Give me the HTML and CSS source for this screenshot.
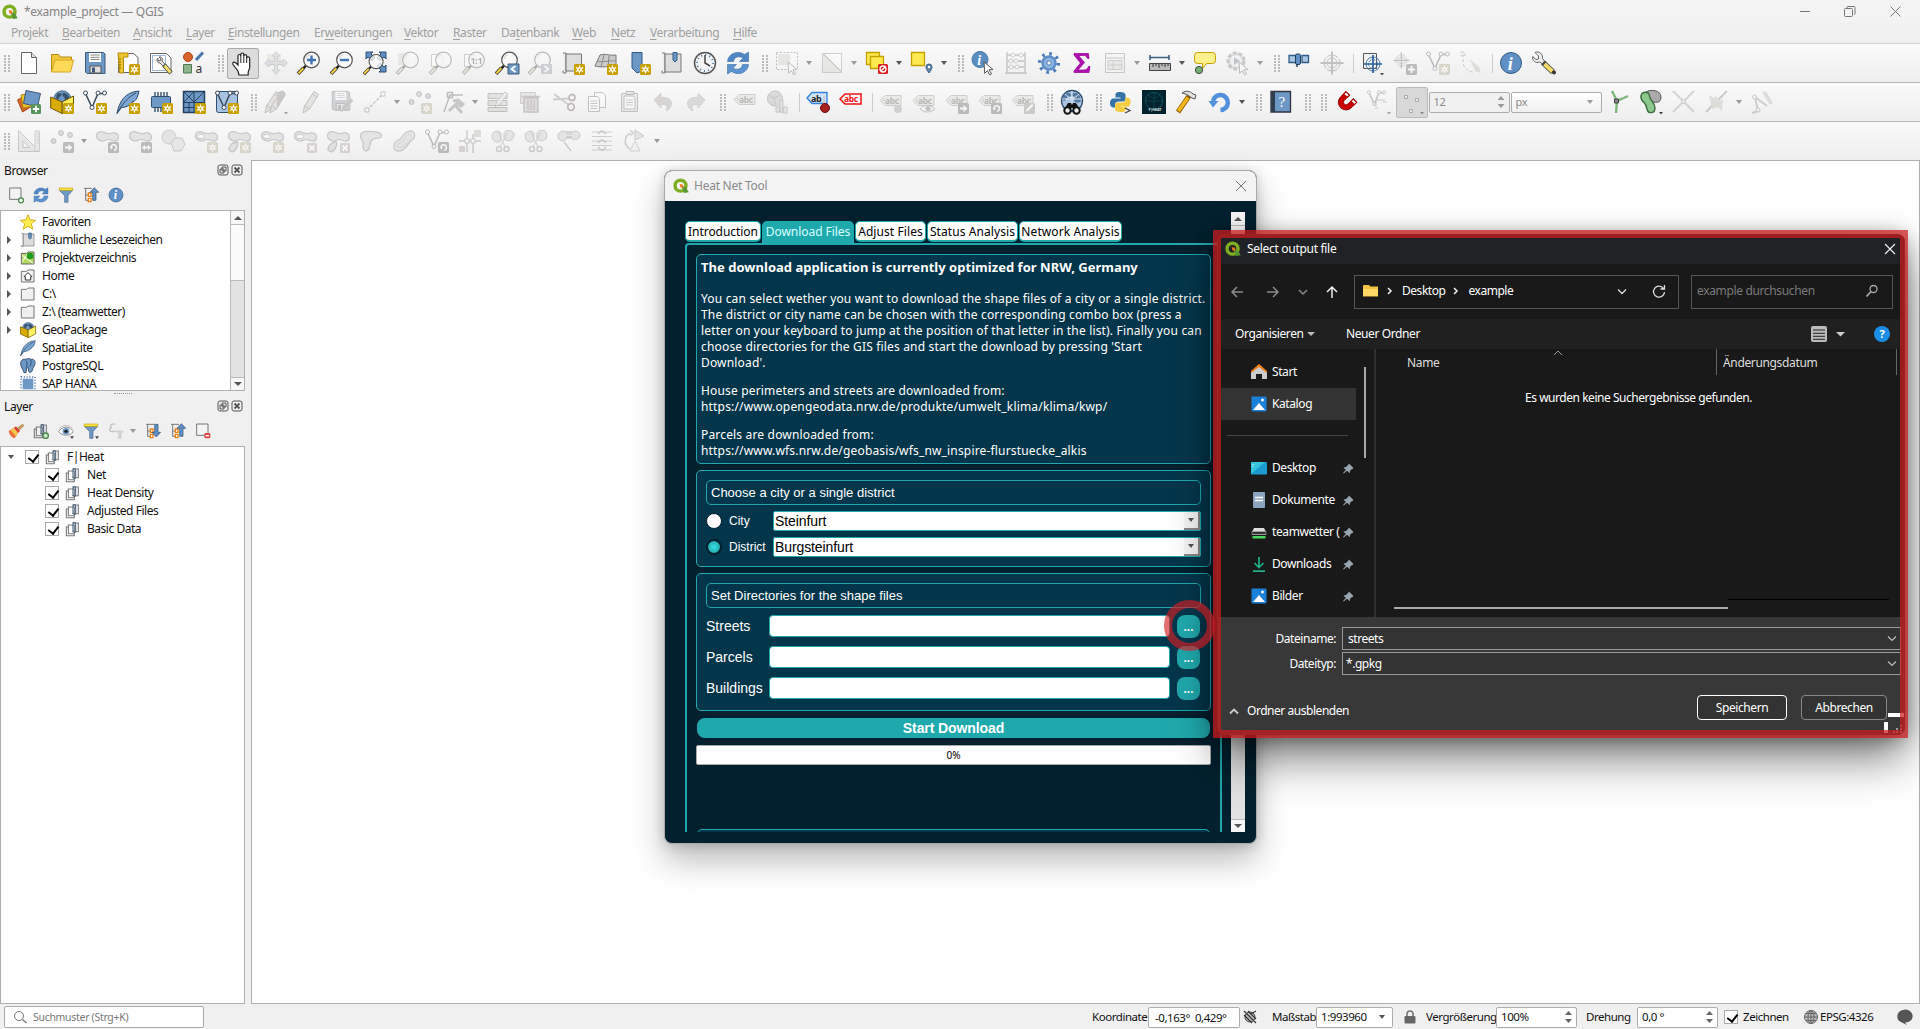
FILE: index.html
```html
<!DOCTYPE html>
<html lang="de">
<head>
<meta charset="utf-8">
<title>*example_project — QGIS</title>
<link rel="stylesheet" href="styles.css">
</head>
<body>
<svg class="defs" aria-hidden="true"><defs>
<!-- badges -->
<g id="bnew"><rect x="13" y="13" width="11" height="11" rx="1.5" fill="#c8a000"/><path d="M18.5 14.4v8.2M14.9 16.4l7.2 4.2M14.9 20.6l7.2-4.2" stroke="#fff" stroke-width="1.2"/><circle cx="18.5" cy="18.5" r="2.3" fill="#fff"/><circle cx="18.5" cy="18.5" r="1" fill="#c8a000"/></g>
<g id="badd"><rect x="14" y="14" width="10" height="10" rx="1.5" fill="#59945c"/><path d="M19 15.800v6.400M15.800 19h6.400" stroke="#fff" stroke-width="1.800"/></g>
<g id="bdel"><rect x="14" y="14" width="10" height="10" rx="1.500" fill="#c88a92"/><path d="M16.500 16.500l5 5M21.500 16.500l-5 5" stroke="#fff" stroke-width="1.800"/></g>
<g id="bmove"><rect x="13" y="13" width="11" height="11" rx="1.500" fill="#555"/><path d="M15 17.500h3.500v-2.500l4 3.500-4 3.500v-2.500h-3.500z" fill="#fff"/></g>
<g id="bplus"><rect x="13" y="13" width="11" height="11" rx="1.500" fill="#555"/><path d="M18.500 15v7M15 18.500h7" stroke="#fff" stroke-width="2"/></g>
<g id="bscale"><rect x="13" y="13" width="11" height="11" rx="1.500" fill="#555"/><path d="M14 18.500l3-3v2h3v-2l3 3-3 3v-2h-3v2z" fill="#fff"/></g>
<g id="brot"><rect x="13" y="13" width="11" height="11" rx="1.500" fill="#555"/><path d="M16 18.500a2.700 2.700 0 1 1 3 2.700" fill="none" stroke="#fff" stroke-width="1.500"/><path d="M14.600 18h3.400l-1.700 2.500z" fill="#fff"/></g>
<g id="bpen"><rect x="13" y="13" width="11" height="11" rx="1.500" fill="#888468"/><path d="M15 22l1-3 5-5 1.500 1.500-5 5z" fill="#fff"/></g>
<g id="lens"><circle cx="14.500" cy="9" r="7.800" fill="#fafafa" fill-opacity=".8" stroke="#555" stroke-width="1.200"/><path d="M9 8a6 6 0 0 1 4-4.500" stroke="#ccc" fill="none"/><path d="M8.800 14.800l-2.500 2.500" stroke="#222" stroke-width="2.500"/><path d="M6.500 17l-5.500 5.800" stroke="#333" stroke-width="3.600"/><path d="M6.300 17.200l-4.900 5.200" stroke="#fcd440" stroke-width="2"/></g>
<g id="blob"><path d="M1.500 7c0-5 5-5 8-3.500S15 5 17 4s6.500.5 6.500 4-3 5-6.500 3.500-4.500-1.500-7 0S1.500 11 1.500 7z" fill="#bcc8bc" stroke="#777" stroke-width="1.300"/></g>
<g id="vee"><path d="M2.500 3.500l6.500 14 6-14h7" fill="none" stroke="#3a4a58" stroke-width="1.500"/><g fill="#fff" stroke="#3a4a58"><circle cx="2.500" cy="3" r="2"/><circle cx="9" cy="17.500" r="2"/><circle cx="15" cy="3" r="2"/><circle cx="21.500" cy="3" r="2"/></g></g>
<g id="globe"><circle cx="12" cy="12" r="11" fill="#6d97c4" stroke="#2f4e6c"/><path d="M5 5c3-2 6-1 6 1s-3 2-3 4-4 2-4 0zM13 4c4-1 7 3 8 6s-3 5-5 4 0-4-2-5-3-3-1-5zM8 14c3 0 5 2 4 4s-3 4-4 2-2-5 0-6z" fill="#37526f"/></g>
<g id="globe2"><circle cx="12" cy="11" r="10.500" fill="#a9c3e0" stroke="#2f4e6c" stroke-width="1.300"/><path d="M3 6c4-4 8-4 8-1s-4 1-5 4-3 2-4 0zM13 3c5-1 8 4 8 7s-4 3-6 2 1-4-1-5-3-2-1-4z" fill="#5478a0"/><path d="M12 1v18M2 9h20M5 4c4 5 10 5 14 0" fill="none" stroke="#dce8f4"/></g>
<g id="mouse"><path d="M13 11l9 7.500-4 .3 2.500 4-1.800 1-2.300-4.200-2.700 2.800z" fill="#fff" stroke="#555"/></g>
<g id="abc"><path d="M1 10.500L6 5.500h16v10H6z" fill="#ddd6b8" stroke="#8c8668"/><circle cx="5" cy="10.500" r="1" fill="#8c8668"/><text x="6" y="13.500" font-size="8.500" font-weight="bold" fill="#444">abc</text></g>
<!-- project toolbar -->
<g id="new"><path d="M4.500 1.500h10l5 5v16h-15z" fill="#fff" stroke="#666"/><path d="M14.500 1.500v5h5" fill="#ddd" stroke="#666"/></g>
<g id="open"><path d="M1.500 20.500v-17h7l2 2.500h11v3" fill="#f3c73a" stroke="#b58a10"/><path d="M1.500 21L5 9h18.500l-3 12z" fill="#fcd956" stroke="#d2a625"/></g>
<g id="save"><path d="M2.500 1.500h18l1.500 1.500v19.500H4L2.500 21z" fill="#6d97c4" stroke="#3f5a78"/><path d="M6 2h12v9H6z" fill="#fff"/><path d="M7.500 4h9M7.500 6.300h9M7.500 8.500h9" stroke="#888"/><path d="M7 15h11v7H7z" fill="#ddd" stroke="#555"/><path d="M9 16.500h3v5H9z" fill="#3f5a78"/></g>
<g id="layout"><path d="M2.500 2.500h15l4.500 4v15h-19.500z" fill="#fff" stroke="#666"/><path d="M2 2h10v4H7.500v16H3.500z" fill="#ecc42c" stroke="#b58a10"/><path d="M3 8h2M3 11h2M3 14h2M3 17h2" stroke="#8a6a00"/><use href="#bnew"/></g>
<g id="layman"><path d="M1.500 2.500h16l4.500 4.500v14.500H1.500z" fill="#fff" stroke="#666"/><path d="M3.500 4.500h13v15h-13z" fill="none" stroke="#9db7e0"/><path d="M9 7c-2 2-1 5 2 5l3 3 2-2-3-3c1-3-1-5-3-4l2 2-1 2-2-.5z" fill="#e4e4e4" stroke="#666"/><path d="M15 14l7 8" stroke="#444" stroke-width="4.500"/><path d="M15.500 14.600l6 6.800" stroke="#f2dd6b" stroke-width="3"/></g>
<g id="style"><circle cx="6" cy="6" r="4.500" fill="#d9622b" stroke="#a84a1c"/><path d="M14 9l7-7.500" stroke="#4b77a8" stroke-width="3"/><path d="M1.500 13.500h8v8.500h-8z" fill="#8db58d" stroke="#4f7a4f"/><text x="13.500" y="22" font-size="12" fill="#333">a</text></g>
<g id="hand"><path d="M8 23l-1-4-5-6.500c-1-2 1-3.200 2.700-1.700L7 13V4c0-2 2.800-2 2.800 0V2.500c0-2 3-2 3 0V4c0-2 2.900-1.800 2.900.3V6c.2-1.700 3-1.500 3 .5V16l-1.500 4v3z" fill="#fff" stroke="#222" stroke-width="1.200"/><path d="M9.800 4v7M12.800 3v8M15.700 5v6" stroke="#222"/></g>
<g id="pansel"><path d="M3 3h14v12H3z" fill="#dcd2a4"/><path d="M12 .500l4 4.500h-2.500v5.500H19V8l4.500 4L19 16v-2.500h-5.500V19H16l-4 4.500L8 19h2.500v-5.500H5V16L.5 12 5 8v2.500h5.500V5H8z" fill="#aebdce" stroke="#7d8ea0"/></g>
<g id="zin"><use href="#lens"/><path d="M14.500 4.500v9M10 9h9" stroke="#3f75b5" stroke-width="2.400"/></g>
<g id="zout"><use href="#lens"/><path d="M10 9h9" stroke="#3f75b5" stroke-width="2.400"/></g>
<g id="zfull"><path d="M3 1h7L8 3l4 4-3 3-4-4-2 2zM23 1h-7l2 2-4 4 3 3 4-4 2 2zM23 21h-7l2-2-4-4 3-3 4 4 2-2z" fill="#5f8fc4" stroke="#2f4e6c"/><g transform="translate(0 2.500) scale(.9)"><use href="#lens"/></g></g>
<g id="zsel"><path d="M2 2h11v12H2z" fill="#dcd2a4"/><use href="#lens"/></g>
<g id="zlay"><path d="M2.500 3.500h11v12h-11z" fill="#fff" stroke="#888"/><use href="#lens"/></g>
<g id="zone"><path d="M2.500 3.500h11v12h-11z" fill="#fff" stroke="#888"/><use href="#lens"/><text x="8.500" y="12.500" font-size="9" font-weight="bold" fill="#333">1:1</text></g>
<g id="zlast"><use href="#lens"/><path d="M13 13h11v10H13z" fill="#6d97c4" stroke="#3f5a78"/><path d="M20.500 15l-4 3 4 3" stroke="#fff" stroke-width="1.800" fill="none"/></g>
<g id="znext"><use href="#lens"/><path d="M13 13h11v10H13z" fill="#6d97c4"/><path d="M16.500 15l4 3-4 3" stroke="#fff" stroke-width="1.800" fill="none"/></g>
<g id="mapv"><path d="M2 2h3v20H3c-2 0-2-2 0-2" fill="#eee" stroke="#777"/><path d="M5 3h15.500v17H5z" fill="#ddd" stroke="#777"/><use href="#bnew"/></g>
<g id="map3"><path d="M6 4c5-2 9 1 16 0v11c-7 0-14 2-21 0z" fill="#ccc" stroke="#777"/><path d="M3 10c6 2 12-1 18 0M10 4L7 16M15 5l-1 11" stroke="#888" fill="none"/><use href="#bnew"/></g>
<g id="bmark"><path d="M5 1.500h10V20L10 22l-5-5z" fill="#6d97c4" stroke="#2f5b88"/><use href="#bnew"/></g>
<g id="bmarks"><path d="M2 2h3v20H3c-2 0-2-2 0-2" fill="#eee" stroke="#777"/><path d="M5 3h16v18H5z" fill="#ddd" stroke="#777"/><path d="M13 1.500h4V9l-2 2-2-2z" fill="#6d97c4" stroke="#2f5b88"/></g>
<g id="clock"><circle cx="12" cy="12" r="10.500" fill="#f4f4f4" stroke="#555" stroke-width="1.500"/><circle cx="12" cy="12" r="8" fill="none" stroke="#4b77a8" stroke-width="2" stroke-dasharray="1 3.190"/><path d="M12 4v8l5 3" fill="none" stroke="#444" stroke-width="1.500"/></g>
<g id="refresh"><path d="M1.500 10.500C2 3 11-1.500 18.500 3.500L22.500 1v9.500h-9l3.500-3.500C13 4.500 8 6 7.500 10.500z" fill="#4f86c4" stroke="#3b6ba5" stroke-width=".6"/><path d="M22.500 13.500C22 21 13 25.500 5.500 20.500L1.500 23v-9.500h9L7 17c4 2.500 9 1 9.500-3.500z" fill="#5c93cf" stroke="#3b6ba5" stroke-width=".6"/></g>
<g id="select"><path d="M1.500 1.500h21v17h-21z" fill="#fbfbf0" stroke="#555" stroke-dasharray="2 1.500"/><path d="M3 3h12v11H3z" fill="#d4cba0"/><use href="#mouse"/></g>
<g id="selval"><path d="M2.500 2.500v19h19z" fill="#dcd2a4" stroke="#888"/><path d="M3.500 2.500h18v18z" fill="#fff" stroke="#888"/></g>
<g id="desel"><path d="M1.500 1.500h13v12h-13z" fill="#fce94f" stroke="#c4a000" stroke-width="1.300"/><path d="M5.500 5.500h13v12h-13z" fill="#fce94f" stroke="#c4a000" stroke-width="1.300"/><rect x="13" y="13" width="10" height="10" rx="1.500" fill="#d82020"/><circle cx="18" cy="18" r="3" fill="none" stroke="#fff" stroke-width="1.300"/><path d="M16 20l4-4" stroke="#fff" stroke-width="1.300"/></g>
<g id="selloc"><path d="M1.500 1.500h13v13h-13z" fill="#fce94f" stroke="#c4a000" stroke-width="1.300"/><path d="M19 22c-2-3-3-4-3-6a3 3 0 0 1 6 0c0 2-1 3-3 6z" fill="#5f84a4" stroke="#3f6484"/><circle cx="19" cy="16" r="1.200" fill="#fff"/></g>
<g id="ident"><circle cx="9" cy="8.500" r="8" fill="#5b8dc0" stroke="#4878ac"/><text x="6.300" y="13.500" font-size="14" font-style="italic" font-weight="bold" class="sf" fill="#fff">i</text><use href="#mouse"/></g>
<g id="abacus"><path d="M3 1v20M21 1v20M1 22h22M3 4h18M3 10h18M3 16h18" fill="none" stroke="#666" stroke-width="1.300"/><g fill="#fff" stroke="#888"><circle cx="9" cy="4" r="2"/><circle cx="17" cy="4" r="2"/><circle cx="7" cy="10" r="2"/><circle cx="12" cy="10" r="2"/><circle cx="7" cy="16" r="2"/><circle cx="13" cy="16" r="2"/></g></g>
<g id="gear"><circle cx="12" cy="12" r="9.300" fill="none" stroke="#4a7ab5" stroke-width="3.500" stroke-dasharray="2.600 4.700"/><circle cx="12" cy="12" r="6.500" fill="#8fb4e0" stroke="#5f8fc8" stroke-width="2.500"/><circle cx="12" cy="12" r="2.200" fill="#f4f4f4" stroke="#4a7ab5"/></g>
<g id="sigma"><path d="M4 2.500h14.500l.5 5h-1.500C16.500 5 15.500 4.500 13 4.500H8.500l6 7-6.500 7.500h5.500c3 0 4-1 5-3.500h1.500l-1 6H4v-1.500l6.500-8L4 4z" fill="#b010b0" stroke="#900090" stroke-width=".7"/></g>
<g id="table"><path d="M2.500 2.500h19v19h-19z" fill="#f4f4f4" stroke="#777"/><path d="M3 7h18" stroke="#777"/><path d="M5 9.500h14v9H5zM5 14h14M10 9.500v9" fill="#dcd2a4" stroke="#888"/></g>
<g id="measure"><path d="M2 6.500h19M2 4v5M21 4v5" stroke="#3d5f80" stroke-width="1.600"/><path d="M1.500 12.500h21v7h-21z" fill="#bbb" stroke="#444"/><path d="M5 13v3M8 13v2M11 13v4M14 13v2M17 13v3M20 13v2" stroke="#333"/></g>
<g id="tip"><path d="M4.500 1.500h15a3 3 0 0 1 3 3v5a3 3 0 0 1-3 3h-6l-4 5v-5h-5a3 3 0 0 1-3-3v-5a3 3 0 0 1 3-3z" fill="#fcf08c" stroke="#c4a000"/><circle cx="6" cy="19" r="3.600" fill="#73b273" stroke="#444"/></g>
<g id="action"><circle cx="10" cy="10" r="8" fill="#ddd" stroke="#777" stroke-width="3" stroke-dasharray="4 1.700"/><circle cx="10" cy="10" r="6.500" fill="#eee" stroke="#888"/><path d="M8 6l6 4-6 4z" fill="#3b75b0"/><use href="#mouse"/></g>
<g id="gps"><path d="M2 4.500h8v7H2zM15 4.500h6.500v7H15z" fill="#a9c6e3" stroke="#2f5b88" stroke-width="1.300"/><rect x="8.500" y="3" width="5" height="10.500" rx="1.500" fill="#5f8fc4" stroke="#24425f"/><path d="M10 13v3" stroke="#24425f" stroke-width="1.500"/></g>
<g id="cross"><circle cx="12" cy="12" r="8" fill="#eef" stroke="#555" stroke-dasharray="5 1.500"/><circle cx="12" cy="12" r="5" fill="none" stroke="#777"/><path d="M12 .500v23M.500 12h23" stroke="#667" stroke-width="2"/></g>
<g id="cross2"><path d="M3.500 2.500h13v15h-13z" fill="#f4f4f4" stroke="#555"/><circle cx="13" cy="13" r="7" fill="none" stroke="#4b77a8"/><circle cx="13" cy="13" r="4.500" fill="none" stroke="#4b77a8" stroke-dasharray="3 1"/><path d="M13 4v18M4 13h18" stroke="#2f62a0" stroke-width="1.700"/></g>
<g id="info"><circle cx="12" cy="12" r="10.500" fill="#6090c4" stroke="#2f5b88"/><text x="8.700" y="18.500" font-size="18" font-style="italic" font-weight="bold" class="sf" fill="#fff">i</text></g>
<g id="wrench"><path d="M3 1.500l3.500 3.500v3L4 8.500.7 5.500C0 10 4 12.500 7.500 11L11 13l2-2-2.500-3.500C11 3 7-.5 3 1.500z" fill="#eee" stroke="#666"/><path d="M11 11.500l10 9.500" stroke="#444" stroke-width="5.500"/><path d="M12.500 13l8 7.500" stroke="#f2dd6b" stroke-width="3.800"/><circle cx="22" cy="21.500" r="2" fill="#333"/></g>
<!-- layer toolbar -->
<g id="dsm"><path d="M.5 10l10-6 5 12-10 6z" fill="#d9622b" stroke="#a84a1c"/><path d="M4 5l11-2 2 13-11 2z" fill="#f0c52c" stroke="#a98512"/><path d="M9 .500l14.500 3-3 13-14-3z" fill="#6d97c4" stroke="#3f5a78"/><use href="#badd"/></g>
<g id="gpkg"><g transform="translate(3 0) scale(.78)"><use href="#globe"/></g><path d="M.7 7l11.500 5v11.500L.7 18z" fill="#d8ac00" stroke="#6b5400"/><path d="M12.200 12L23.500 6v12l-11.300 5.500z" fill="#fcf060" stroke="#6b5400"/></g>
<g id="quill"><path d="M1 23.500C3 13 8 2 23 1c-1 5-2 8-5 10.500l-2 .3.500 1C13 16 9 17.500 5.500 17.500z" fill="#7ea6d4" stroke="#2f4e6c"/><path d="M1 23.500C6 14 12 7 20 3" stroke="#2f4e6c" fill="none"/></g>
<g id="chip"><path d="M6 2v20M9 2v20M12 2v20M15 2v20M18 2v20" stroke="#24425f" stroke-width="1.300"/><rect x="2.500" y="6.500" width="19" height="11" rx="1" fill="#6d97c4" stroke="#2f4e6c"/><use href="#bnew"/></g>
<g id="mesh"><path d="M1.500 1.500h21v21h-21z" fill="#6d97c4" stroke="#24425f" stroke-width="1.500"/><path d="M12 1.500v21M1.500 12.500h21M1.500 1.500l11 11M12 1.500L1.500 12.500M12 12l10.500-10.500M7 12.500v10M1.500 17.500H12" stroke="#24425f" fill="none"/><use href="#bnew"/></g>
<g id="virt"><rect x="1.500" y="1.500" width="21" height="21" rx="2" fill="#a8c3e2" stroke="#2f4e6c"/><use href="#vee"/><use href="#bnew"/></g>
<g id="pencil"><path d="M6 23l1.500-7L17 1.500l4.500 3L12.500 19z" fill="#ccc49c" stroke="#666"/><path d="M8 16l4.500 3M15 4l5 3" stroke="#666"/></g>
<g id="pencils"><g transform="translate(-5 0)"><use href="#pencil"/></g><use href="#pencil"/><path d="M13 3l6-2 2 2-8 14" fill="#a0705c" stroke="#666"/></g>
<g id="savee"><g transform="scale(.9)"><use href="#save"/></g><path d="M11 22l2-6 7-8 3 2.500-7 8z" fill="#a0705c" stroke="#888"/></g>
<g id="line"><path d="M4 20L20 4" stroke="#666" stroke-width="1.300" stroke-dasharray="3 1.500"/><path d="M2 18h4v4H2zM18 2h4v4h-4z" fill="#fff" stroke="#666"/></g>
<g id="pts"><g fill="#aaa" stroke="#666"><circle cx="3.500" cy="12" r="2.500"/><circle cx="11" cy="4" r="2.500"/><circle cx="20" cy="6" r="2.500"/></g></g>
<g id="vtx"><path d="M3 22L9 5h13M6.500 2.500h5v5h-5z" fill="none" stroke="#555" stroke-width="1.400"/><path d="M8 21l9-9M12 11l5-1 5 4-2 2-3-2M14 15l7 8" fill="none" stroke="#777" stroke-width="3"/></g>
<g id="attr"><path d="M2 3.500h19v5H2zM2 10.500h19v5H2zM2 17.500h19v4H2z" fill="#c8c09a" stroke="#666"/><path d="M9 17l2-6 8-9 3 2-8 10z" fill="#ddd" stroke="#777"/></g>
<g id="trash"><path d="M1.500 2.500h15v11h-15z" fill="#d4cba0" stroke="#888"/><path d="M3 6.500h18M5 8h14v14H5zM9 10v10M12 10v10M15 10v10" fill="#caa" stroke="#866" stroke-width="1.400"/></g>
<g id="cut"><path d="M2 4l15 11M1 9.500l16-1" stroke="#888" stroke-width="2"/><circle cx="20" cy="7.500" r="3" fill="none" stroke="#a44" stroke-width="1.800"/><circle cx="19" cy="17" r="3.300" fill="none" stroke="#a44" stroke-width="1.800"/></g>
<g id="copy"><path d="M9.500 2.500h8l3 3v12h-11z" fill="#fff" stroke="#666"/><path d="M3.500 6.500h9l2 2v13h-11z" fill="#fff" stroke="#666"/><path d="M5.500 11h7M5.500 13.500h7M5.500 16h7M5.500 18.500h7" stroke="#777"/></g>
<g id="paste"><path d="M3.500 3.500h16v18h-16z" fill="#ddd6b8" stroke="#666"/><path d="M6 6h9l2 2v11H6z" fill="#fff" stroke="#666"/><path d="M8 10h7M8 12.500h7M8 15h7" stroke="#777"/><path d="M8 1.500h8v3H8z" fill="#ccc" stroke="#555"/></g>
<g id="undo"><path d="M3 10l7-7v4.500c8-1 12 3 10 8.500-1 3-3 4-5 5 2-5 1-7-5-6.500V18z" fill="#b09a8a" stroke="#998"/></g>
<g id="redo"><path d="M21 10l-7-7v4.500C6 6.500 2 10.500 4 16c1 3 3 4 5 5-2-5-1-7 5-6.500V18z" fill="#9ab09a" stroke="#899"/></g>
<g id="pie"><circle cx="9" cy="8.500" r="7.500" fill="#9cba9c" stroke="#777"/><path d="M9 8.500V16A7.500 7.500 0 0 1 2.500 5zM9 8.500L2.500 5A7.500 7.500 0 0 1 15 4z" fill="#c4a0a0" stroke="#777"/><path d="M10 17h4v5h-4zM14 10h3v12h-3zM17 17h4v6h-4z" fill="#ccc" stroke="#777"/></g>
<g id="labpin"><path d="M1 8L6 2.500h15v11H6z" fill="#cfe3fc" stroke="#3584e4" stroke-width="1.400"/><text x="5" y="12" font-size="9" font-weight="bold" fill="#222">ab</text><path d="M18 6v8" stroke="#ccc" stroke-width="2"/><circle cx="19" cy="18" r="4.500" fill="#a82020" stroke="#701010"/></g>
<g id="labred"><path d="M1 8L6 3h16v10H6z" fill="#fff" stroke="#f01010" stroke-width="1.500"/><text x="5" y="11" font-size="8.500" font-weight="bold" fill="#f01010">abc</text></g>
<g id="abcpin"><use href="#abc"/><circle cx="19" cy="19" r="4" fill="#a88"/></g>
<g id="abceye"><use href="#abc"/><path d="M8 19c4-5 10-5 15 0-5 4-11 4-15 0z" fill="#eee" stroke="#666"/><circle cx="16" cy="18.500" r="2.500" fill="#666"/></g>
<g id="meta"><use href="#globe2"/><path d="M5 18l3-5h3l1 2 1-2h3l3 5" fill="#111"/><circle cx="7.500" cy="20.500" r="3.200" fill="#eee" stroke="#111" stroke-width="2"/><circle cx="16.500" cy="20.500" r="3.200" fill="#eee" stroke="#111" stroke-width="2"/></g>
<g id="python"><path d="M11 2c-4 0-4.500 1.500-4.500 3v2.500h5v1H4.500C2 8.500 1 11 1 13s1 4.500 3 4.500h2V15c0-2 1.500-3.500 3.500-3.500h4c2 0 3-1 3-3V5c0-2-2-3-5.500-3z" fill="#3572a5"/><path d="M12 22c4 0 4.500-1.500 4.500-3v-2.500h-5v-1h7V9.500c0-1 .5-1.500 1-1.500 1.500 0 2 2 2 4s-.5 4.500-3 4.500" fill="#f5cd42"/><path d="M12 22c-4 0-6-1-6-3v-3.500c0-2 1-3 3-3h4c2 0 3.500-1.500 3.500-3.500V7.500h1.500c2 0 3 2 3 4s-.5 4.500-3 4.500H12v1h4.500v2c0 2-.5 3-4.500 3z" fill="#f5cd42"/><path d="M16 18l5 2.500-5 2.500" fill="none" stroke="#444" stroke-width="1.300"/></g>
<g id="fheat"><path d="M0 0h24v24H0z" fill="#02222e"/><circle cx="12" cy="11" r="8.500" fill="none" stroke="#0d5560"/><path d="M12 3v15M4 11h16M6 5c4 4 8 4 12 0" fill="none" stroke="#0b434e"/><text x="6.500" y="21" font-size="4" font-weight="bold" fill="#cdd">F|HEAT</text></g>
<g id="hammer"><path d="M3 22L14 6" stroke="#8a5a00" stroke-width="5"/><path d="M3.500 21L13 7.500" stroke="#f5b81c" stroke-width="3.500"/><path d="M7 3c4-3 8-2 11 1l3 1-1 4-3-1-3-2-3-2z" fill="#e4e4e4" stroke="#555"/></g>
<g id="reload"><path d="M5 11a7.500 7.500 0 1 1 7.500 9" fill="none" stroke="#5090dc" stroke-width="4.500"/><path d="M.5 11h10l-5.500 6.500z" fill="#5090dc"/></g>
<g id="help"><path d="M2 1.500h19.500v20.500H2z" fill="#6d97c4" stroke="#334" stroke-width="1.300"/><path d="M2 1.500h4V22H2z" fill="#2f3f50"/><text x="9.500" y="17" font-size="15" class="sf" fill="#fff">?</text></g>
<g id="magnet"><g transform="rotate(45 12 12)"><path d="M3 3h6v9a3 3 0 0 0 6 0V3h6v9a9 9 0 0 1-18 0z" transform="translate(2 2) scale(.85)" fill="#cc0000" stroke="#800"/><path d="M4.800 4.700h4.800V8H4.800zM15 4.700h4.800V8H15z" fill="#eee" stroke="#a00"/></g></g>
<g id="boxes"><path d="M4.500 4.500h3v3h-3zM15.500 7.500h3v3h-3zM9.500 18.500h3v3h-3z" fill="#e8e8e8" stroke="#aaa"/></g>
<g id="topo"><path d="M6 1l5 10 11-5M11 11l-1 12" fill="none" stroke="#7fb87f" stroke-width="2.400"/><path d="M8.500 9h4v4h-4z" fill="#888" stroke="#444"/></g>
<g id="avoid"><path d="M7 2c4-3 15-2 15 5s-6 5-9 5z" fill="#aaa" stroke="#555"/><path d="M2 6c1-5 8-5 8.500 0s5.500 6 5.500 12-7 6-8 1-1.500-5-3.500-7S1.500 9 2 6z" fill="#8cc88c" stroke="#3d6b3d" stroke-width="1.400"/></g>
<g id="xing"><path d="M1 1l21 21M22 1L1 22" stroke="#999" stroke-width="2"/><circle cx="11.500" cy="11.500" r="2" fill="#ddd" stroke="#777"/></g>
<g id="trace"><path d="M1 22L22 1" stroke="#777" stroke-width="2"/><path d="M4 5l5 3 2-2 4 5 3-2-1 12-4-4-6 2z" fill="#bdb489"/></g>
<g id="zig"><path d="M2 23l6-2L5 7l12 9M15 3l6 11" fill="none" stroke="#888" stroke-width="2"/><circle cx="4.500" cy="7" r="2" fill="#eee" stroke="#777"/><circle cx="8" cy="20" r="2" fill="#eee" stroke="#777"/><path d="M12 2l4-1 7 12-3 2z" fill="#bdb489"/></g>
<!-- digitizing toolbar -->
<g id="tri"><path d="M1.500 1.500v21h21zM6 12v6.500h6.500z" fill="#dcd0c4" fill-rule="evenodd" stroke="#777"/><path d="M18 2h4.500v20H18zM20 5h2M20 8h2M20 11h2M20 14h2" fill="#ddd6b8" stroke="#888"/></g>
<g id="simpl"><circle cx="8" cy="8" r="7" fill="#bcc8bc" stroke="#777"/><path d="M10 14l4-5h7l3 6-4 7h-7z" fill="#ccd0d4" stroke="#777"/></g>
<g id="ring"><use href="#blob"/><ellipse cx="7" cy="7.500" rx="3.500" ry="2.300" fill="#fff" stroke="#777"/></g>
<g id="part"><use href="#blob"/><path d="M2 21c0-5 4-8 8-8 2 2-1 9-5 10z" fill="#bcc8bc" stroke="#777" stroke-width="1.300"/></g>
<g id="resh"><path d="M1.500 7c0-5 7-5 11-4.500S24 3 22 8c-1 2-6 0-9 3s-1 7-4 10-6-2-5-6-2.500-3-2.500-8z" fill="#bcc8bc" stroke="#777" stroke-width="1.300"/></g>
<g id="offs"><path d="M2 17c0-6 6-5 8-9s9-9 12-4-3 7-5 10-5 8-10 8-5-2-5-5z" fill="#ddd6b8" stroke="#777" stroke-width="1.300"/><path d="M4.500 17c1-4 6-4 8-8s6-6 7-2-3 5-5 8-9 6-10 2z" fill="#bcc8bc" stroke="#999"/></g>
<g id="crossb"><path d="M9 1v22M15 5v19M1 12h22" stroke="#777" stroke-width="1.400"/><path d="M7 10h4v4H7zM13 10h4v4h-4z" fill="#fff" stroke="#777"/><path d="M16 1h7v7h-7z" fill="#b8ae80"/><path d="M1 17h6v6H1z" fill="#c88a92"/></g>
<g id="split"><path d="M1 7c0-6 9-6 9-2v6c-2 4-9 2-9-4zM13 5c0-5 10-5 10 1s-6 7-10 4z" fill="#bcc8bc" stroke="#777"/><path d="M7 3l7 15M17 3l-8 15" stroke="#888"/><circle cx="8" cy="20" r="2.500" fill="none" stroke="#a77" stroke-width="1.500"/><circle cx="15.500" cy="20" r="2.500" fill="none" stroke="#a77" stroke-width="1.500"/></g>
<g id="merge"><path d="M1 7c0-6 9-6 9-2h4c0-4 9-4 9 1s-6 6-9 3h-4c-2 4-9 4-9-2z" fill="#bcc8bc" stroke="#777"/><path d="M9 3h6M9 8h6M7 13l7 9" stroke="#777" fill="none" stroke-width="1.300"/></g>
<g id="mattr"><path d="M2 3h20M2 7.500h20M2 12h20M2 16.500h20M2 21h20" stroke="#888" fill="none"/><path d="M8 5c3-4 5-4 8 0M8 14c3-4 5-4 8 0M8 18c3 4 5 4 8 0" stroke="#777" stroke-width="1.400" fill="none"/></g>
<g id="rotsym"><path d="M7 20C-1 15 2 5 9 4" fill="none" stroke="#777" stroke-width="1.300"/><path d="M7 1l4 3-4 3M12 1l9 6-9 4z" fill="#bcc8bc" stroke="#777"/><path d="M12 12l5 10H7z" fill="#eee" stroke="#999"/></g>
<!-- panels -->
<g id="star"><path d="M12 1l3.200 7.800 8.300.6-6.400 5.300 2.100 8.200-7.200-4.500-7.200 4.500 2.100-8.200L.5 9.400l8.300-.6z" fill="#ffee50" stroke="#c8a000" stroke-width="1.200"/></g>
<g id="folder"><path d="M2 20V5h8l2-2h9v18H2z" fill="#f0f0f0" stroke="#777" stroke-width="1.500"/></g>
<g id="pfolder"><path d="M2 20V5h8l2-2h9v18H2z" fill="#b5d95e" stroke="#666" stroke-width="1.500"/><path d="M3 8l17 12M3 18l8-12" stroke="#fff" stroke-width="1.500"/><circle cx="15" cy="9" r="5" fill="#1f9a1f"/></g>
<g id="hfolder"><use href="#folder"/><path d="M6 13l6-6 6 6h-2v5H8v-5z" fill="#fff" stroke="#333" stroke-width="1.500"/></g>
<g id="elephant"><path d="M1 8c0-5 4-7 8-6 3-2 6-1 7 0 5-1 8 3 6 8-1 3-3 5-3 7-1 5-5 6-6 3l-1-6-2 1-1 7H6c-1-5-5-8-5-14z" fill="#6d97c4" stroke="#2f4e6c" stroke-width="1.400"/><path d="M9 4c2 3 2 7 0 10M16 3c2 3 0 8-2 10" stroke="#2f4e6c" fill="none" stroke-width="1.400"/></g>
<g id="hana"><path d="M4 4h16v16H4z" fill="#6d97c4"/><path d="M1.500 1.500h21v21h-21z" fill="none" stroke="#335f94" stroke-width="2" stroke-dasharray="1.600 2.600"/></g>
<g id="addl"><path d="M2.500 1.500h17v17h-17z" fill="#f4f4f4" stroke="#777" stroke-width="1.500"/><circle cx="19.500" cy="20" r="3.700" fill="#fff" stroke="#4a8a4a" stroke-width="2"/></g>
<g id="reml"><path d="M2.500 1.500h17v17h-17z" fill="#f4f4f4" stroke="#777" stroke-width="1.500"/><rect x="14" y="15" width="9" height="8" rx="2" fill="#e04848"/><path d="M16 19h5" stroke="#fff" stroke-width="2"/></g>
<g id="filter"><path d="M2 5h20l-7 8v10h-5V13z" fill="#6d97c4" stroke="#4a6a90"/><path d="M2 1.500h20V5H2z" fill="#fce94f" stroke="#c4a000"/></g>
<g id="tree"><path d="M1.500 2h12M4 2v18h5M4 12h5" fill="none" stroke="#777" stroke-width="1.500"/><path d="M8 9h4v5H8zM8 17h4v5H8z" fill="#fff" stroke="#f08010" stroke-width="2"/></g>
<g id="coll"><use href="#tree"/><path d="M17 1l6.500 7h-4v12h-5V8h-4z" fill="#5f8fc4" stroke="#2f4e6c"/></g>
<g id="expa"><use href="#tree"/><path d="M17 21l6.500-7h-4V2h-5v12h-4z" fill="#5f8fc4" stroke="#2f4e6c"/></g>
<g id="group"><path d="M6 9H2v13h12v-3M5 6h9v13H5zM11 3h9v13h-9" fill="none" stroke="#777" stroke-width="1.600"/><path d="M12 16V6c0-5 4-5 4 0v9c0 3-3 3-3 0" fill="none" stroke="#44617e" stroke-width="1.600"/></g>
<g id="groupadd"><use href="#group"/><circle cx="19" cy="19" r="4" fill="#cfe6cf" stroke="#4a8a4a" stroke-width="2"/></g>
<g id="brush"><path d="M1 12l8-5 6 8-5 8c-4-1-8-5-9-11z" fill="#e8703c"/><path d="M4 11l5-4 6 8-3 5z" fill="#f4c84c"/><path d="M9 7l3-2 6 7-3 3z" fill="#e03c3c"/><path d="M14 8l8-6 1.500 2-7 7z" fill="#d8a860" stroke="#8a5a20"/></g>
<g id="eye"><path d="M1 13C6 4 18 4 23 13 18 20 6 20 1 13z" fill="#fff" stroke="#888" stroke-width="1.400"/><path d="M2 8C7 2 16 2 22 8" fill="none" stroke="#aaa"/><circle cx="12" cy="12.500" r="5" fill="#6d97c4"/><circle cx="12" cy="12.500" r="2.500" fill="#222"/></g>
<g id="eps"><path d="M11 2c-8-2-9 4-5 5-6 1-5 8 5 5" fill="none" stroke="#777" stroke-width="2"/><path d="M12 12h11l-3.500 4v7H16v-7z" fill="#aaa" stroke="#777"/></g>
<g id="qlogo"><circle cx="11.300" cy="11.500" r="8.200" fill="none" stroke="#7fae22" stroke-width="5.200"/><path d="M13 13h6l4.500 8.500-7 1z" fill="#589632"/><path d="M10 9l5 1 .5 4-4 .5z" fill="#ee7913"/></g>
<g id="float"><rect x="1" y="1" width="10" height="10" rx="2" fill="none" stroke="#555"/><path d="M5 3h4v4H5zM3 5h4v4H3z" fill="#eee" stroke="#555"/></g>
<g id="close"><rect x="1" y="1" width="10" height="10" rx="2" fill="none" stroke="#555"/><path d="M3.500 3.500l5 5M8.500 3.500l-5 5" stroke="#555" stroke-width="1.800"/></g>
<!-- file dialog -->
<g id="fhome"><path d="M0 8L8 .500 16 8v7h-5v-5H5v5H0z" fill="#ccc"/><path d="M0 9V7L8 0l8 7v2L8 3z" fill="#f08018"/></g>
<g id="fpic"><rect x=".5" y=".5" width="15" height="15" rx="1" fill="#1a80d8"/><path d="M2 14l6-7 6 7z" fill="#fff"/><circle cx="11.500" cy="4" r="1.500" fill="#fff"/></g>
<g id="fdesk"><rect x="0" y="2" width="16" height="12.500" rx="1" fill="#1c9bd0"/><path d="M0 2h14L0 14z" fill="#35c4dc"/><path d="M2 4v3" stroke="#fff" stroke-dasharray="1 1"/></g>
<g id="fdoc"><rect x="2" y="0" width="12" height="16" rx="1" fill="#8ba3bd"/><path d="M4 5.500h8M4 8.500h8" stroke="#fff" stroke-width="1.500"/></g>
<g id="fdrv"><path d="M3 4h10l2 4v3H1V8z" fill="#ddd"/><path d="M1 7.500h14v3H1z" fill="#333" stroke="#aaa" stroke-width=".6"/><path d="M1.500 12h13v2.500h-13z" fill="#48d860"/></g>
<g id="fdown"><path d="M8 1v10M3.500 7L8 11.500 12.500 7M2 15.200h12" fill="none" stroke="#22b088" stroke-width="1.700"/></g>
<g id="pin"><path d="M6 .5L10.500 5l-1 1H9L7 8l-.3 2.300L4 7.800.8 10.500 0 10l2.800-3L.5 4.500 3 4l2-2z" fill="#9aa4ac"/></g>
</defs></svg>

<header class="titlebar"><svg class="s16" viewBox="0 0 24 24"><use href="#qlogo"/></svg><span>*example_project — QGIS</span>
<svg class="winbtns" width="110" height="20"><path d="M5 9.500h10M95.500 4.500l10 10M105.500 4.500l-10 10M52 7V5.500q0-1 1-1h6q1 0 1 1v6q0 1-1 1" fill="none" stroke="#777"/><rect x="49.500" y="6.500" width="8" height="8" rx="1" fill="none" stroke="#777"/></svg></header>
<nav class="menu"><span>Pro<u>j</u>ekt</span><span><u>B</u>earbeiten</span><span><u>A</u>nsicht</span><span><u>L</u>ayer</span><span><u>E</u>instellungen</span><span>Er<u>w</u>eiterungen</span><span><u>V</u>ektor</span><span><u>R</u>aster</span><span>Da<u>t</u>enbank</span><span><u>W</u>eb</span><span><u>N</u>etz</span><span><u>V</u>erarbeitung</span><span><u>H</u>ilfe</span></nav>

<div class="toolbar"><i class="grip first"></i>
<svg class="t"><use href="#new"/></svg><svg class="t"><use href="#open"/></svg><svg class="t"><use href="#save"/></svg><svg class="t"><use href="#layout"/></svg><svg class="t"><use href="#layman"/></svg><svg class="t"><use href="#style"/></svg>
<i class="grip"></i>
<svg class="t on"><use href="#hand"/></svg><svg class="t off"><use href="#pansel"/></svg><svg class="t"><use href="#zin"/></svg><svg class="t"><use href="#zout"/></svg><svg class="t"><use href="#zfull"/></svg><svg class="t off"><use href="#zsel"/></svg><svg class="t off"><use href="#zlay"/></svg><svg class="t off"><use href="#zone"/></svg><svg class="t"><use href="#zlast"/></svg><svg class="t off"><use href="#znext"/></svg><svg class="t"><use href="#mapv"/></svg><svg class="t"><use href="#map3"/></svg><svg class="t"><use href="#bmark"/></svg><svg class="t"><use href="#bmarks"/></svg><svg class="t"><use href="#clock"/></svg><svg class="t"><use href="#refresh"/></svg>
<i class="grip"></i>
<svg class="t off"><use href="#select"/></svg><i class="dn g"></i><svg class="t off"><use href="#selval"/></svg><i class="dn g"></i><svg class="t"><use href="#desel"/></svg><i class="dn"></i><svg class="t"><use href="#selloc"/></svg><i class="dn"></i>
<i class="grip"></i>
<svg class="t"><use href="#ident"/></svg><svg class="t off"><use href="#abacus"/></svg><svg class="t"><use href="#gear"/></svg><svg class="t"><use href="#sigma"/></svg><svg class="t off"><use href="#table"/></svg><i class="dn g"></i><svg class="t"><use href="#measure"/></svg><i class="dn"></i><svg class="t"><use href="#tip"/></svg><svg class="t off"><use href="#action"/></svg><i class="dn g"></i>
<i class="grip"></i>
<svg class="t"><use href="#gps"/></svg><svg class="t off"><use href="#cross"/></svg><i class="sep"></i>
<svg class="t"><use href="#cross2"/><path d="M20 22h4l-2 2.500z" fill="#444"/></svg><svg class="t off"><g transform="translate(0 1) scale(.7)"><use href="#cross"/></g><use href="#bplus"/></svg><svg class="t off"><use href="#vee"/><use href="#bnew"/></svg><svg class="t off"><path d="M4 3v9q2 8 10 9M2 1h4v4H2z" fill="none" stroke="#777" stroke-dasharray="3 2"/><path d="M11 8l9 8 2 6-6-2z" fill="#bdb489"/></svg><i class="sep"></i>
<svg class="t"><use href="#info"/></svg><svg class="t"><use href="#wrench"/></svg>
</div>

<div class="toolbar"><i class="grip first"></i>
<svg class="t"><use href="#dsm"/></svg><svg class="t"><use href="#gpkg"/><use href="#bnew"/></svg><svg class="t"><use href="#vee"/><use href="#bnew"/></svg><svg class="t"><use href="#quill"/><use href="#bnew"/></svg><svg class="t"><use href="#chip"/></svg><svg class="t"><use href="#mesh"/></svg><svg class="t"><use href="#virt"/></svg>
<i class="grip"></i>
<svg class="t off"><use href="#pencils"/><path d="M20 22h4l-2 2.500z" fill="#111"/></svg><svg class="t off"><use href="#pencil"/></svg><svg class="t off"><use href="#savee"/></svg><svg class="t off"><use href="#line"/></svg><i class="dn g"></i><svg class="t off"><use href="#pts"/><use href="#bnew"/></svg><svg class="t off"><use href="#vtx"/></svg><i class="dn g"></i><svg class="t off"><use href="#attr"/></svg><svg class="t off"><use href="#trash"/></svg><svg class="t off"><use href="#cut"/></svg><svg class="t off"><use href="#copy"/></svg><svg class="t off"><use href="#paste"/></svg><svg class="t off"><use href="#undo"/></svg><svg class="t off"><use href="#redo"/></svg>
<i class="grip"></i>
<svg class="t off"><g transform="translate(0 -1)"><use href="#abc"/></g></svg><svg class="t off"><use href="#pie"/></svg><i class="sep"></i>
<svg class="t"><use href="#labpin"/></svg><svg class="t"><g transform="translate(0 1)"><use href="#labred"/></g></svg><i class="sep"></i>
<svg class="t off"><use href="#abcpin"/></svg><svg class="t off"><use href="#abceye"/></svg><svg class="t off"><use href="#abc"/><use href="#bmove"/></svg><svg class="t off"><use href="#abc"/><use href="#brot"/></svg><svg class="t off"><use href="#abc"/><use href="#bpen"/></svg>
<i class="grip"></i>
<svg class="t"><use href="#meta"/></svg>
<i class="grip"></i>
<svg class="t"><use href="#python"/></svg><svg class="t"><use href="#fheat"/></svg><svg class="t"><use href="#hammer"/></svg><svg class="t"><use href="#reload"/></svg><i class="dn"></i>
<i class="grip"></i>
<svg class="t"><use href="#help"/></svg>
<i class="grip"></i><i class="grip"></i>
<svg class="t"><use href="#magnet"/></svg><svg class="t off"><g transform="scale(.8)"><use href="#vee"/></g><path d="M9 16v-6h9M8 18h3M16 12h4" stroke="#777" fill="none"/><path d="M20 22h4l-2 2.500z" fill="#111"/></svg><svg class="t on dis"><use href="#boxes"/><path d="M20 21h4l-2 2.500z" fill="#888"/></svg>
<span class="spin"><em>12</em><i class="updn"></i></span><span class="combo px"><em>px</em><i class="tri g"></i></span>
<svg class="t"><use href="#topo"/></svg><svg class="t"><use href="#avoid"/><path d="M20 22h4l-2 2.500z" fill="#444"/></svg><svg class="t off"><use href="#xing"/></svg><svg class="t off"><use href="#trace"/></svg><i class="dn g"></i><svg class="t off"><use href="#zig"/></svg>
</div>

<div class="toolbar last"><i class="grip first"></i>
<svg class="t off"><use href="#tri"/></svg><svg class="t off"><use href="#pts"/><use href="#bmove"/></svg><i class="dn g"></i><svg class="t off"><use href="#blob"/><use href="#brot"/></svg><svg class="t off"><use href="#blob"/><use href="#bscale"/></svg><svg class="t off"><use href="#simpl"/></svg><svg class="t off"><use href="#ring"/><use href="#bnew"/></svg><svg class="t off"><use href="#part"/><use href="#bnew"/></svg><svg class="t off"><use href="#ring"/><use href="#bnew"/></svg><svg class="t off"><use href="#ring"/><use href="#bdel"/></svg><svg class="t off"><use href="#part"/><use href="#bdel"/></svg><svg class="t off"><use href="#resh"/></svg><svg class="t off"><use href="#offs"/></svg><svg class="t off"><use href="#vee"/><use href="#brot"/></svg><svg class="t off"><use href="#crossb"/></svg><svg class="t off"><use href="#split"/></svg><svg class="t off"><use href="#split"/></svg><svg class="t off"><use href="#merge"/></svg><svg class="t off"><use href="#mattr"/></svg><svg class="t off"><use href="#rotsym"/></svg><i class="dn g"></i>
</div>

<main>
<aside>
<section class="dock browser">
<h2>Browser<span><svg width="12" height="12"><use href="#float"/></svg><svg width="12" height="12"><use href="#close"/></svg></span></h2>
<div class="dtools"><svg class="s16" viewBox="0 0 24 24"><use href="#addl"/></svg><svg class="s16" viewBox="0 0 24 24"><use href="#refresh"/></svg><svg class="s16" viewBox="0 0 24 24"><use href="#filter"/></svg><svg class="s16" viewBox="0 0 24 24"><use href="#coll"/></svg><svg class="s16" viewBox="0 0 24 24"><use href="#info"/></svg></div>
<div class="box"><ul>
<li><i></i><svg class="s16" viewBox="0 0 24 24"><use href="#star"/></svg>Favoriten</li>
<li><i class="rt"></i><svg class="s16" viewBox="0 0 24 24"><use href="#bmarks"/></svg>Räumliche Lesezeichen</li>
<li><i class="rt"></i><svg class="s16" viewBox="0 0 24 24"><use href="#pfolder"/></svg>Projektverzeichnis</li>
<li><i class="rt"></i><svg class="s16" viewBox="0 0 24 24"><use href="#hfolder"/></svg>Home</li>
<li><i class="rt"></i><svg class="s16" viewBox="0 0 24 24"><use href="#folder"/></svg>C:\</li>
<li><i class="rt"></i><svg class="s16" viewBox="0 0 24 24"><use href="#folder"/></svg>Z:\ (teamwetter)</li>
<li><i class="rt"></i><svg class="s16" viewBox="0 0 24 24"><use href="#gpkg"/></svg>GeoPackage</li>
<li><i></i><svg class="s16" viewBox="0 0 24 24"><use href="#quill"/></svg>SpatiaLite</li>
<li><i></i><svg class="s16" viewBox="0 0 24 24"><use href="#elephant"/></svg>PostgreSQL</li>
<li><i></i><svg class="s16" viewBox="0 0 24 24"><use href="#hana"/></svg>SAP HANA</li>
</ul><div class="sbar"><b class="up"></b><span></span><b class="down"></b></div></div>
<div class="dots"></div>
</section>
<section class="dock layers">
<h2>Layer<span><svg width="12" height="12"><use href="#float"/></svg><svg width="12" height="12"><use href="#close"/></svg></span></h2>
<div class="dtools"><svg class="s16" viewBox="0 0 24 24"><use href="#brush"/></svg><svg class="s16" viewBox="0 0 24 24"><use href="#groupadd"/></svg><svg class="s16" viewBox="0 0 24 24"><use href="#eye"/><path d="M18 20h6l-3 4z" fill="#444"/></svg><svg class="s16" viewBox="0 0 24 24"><use href="#filter"/><path d="M18 20h6l-3 4z" fill="#444"/></svg><svg class="s16 off" viewBox="0 0 24 24"><use href="#eps"/></svg><i class="tri g"></i><svg class="s16" viewBox="0 0 24 24"><use href="#expa"/></svg><svg class="s16" viewBox="0 0 24 24"><use href="#coll"/></svg><svg class="s16" viewBox="0 0 24 24"><use href="#reml"/></svg></div>
<div class="box"><ul>
<li class="root"><i class="tri"></i><b class="chk"></b><svg class="s16" viewBox="0 0 24 24"><use href="#group"/></svg>F|Heat</li>
<li class="sub"><b class="chk"></b><svg class="s16" viewBox="0 0 24 24"><use href="#group"/></svg>Net</li>
<li class="sub"><b class="chk"></b><svg class="s16" viewBox="0 0 24 24"><use href="#group"/></svg>Heat Density</li>
<li class="sub"><b class="chk"></b><svg class="s16" viewBox="0 0 24 24"><use href="#group"/></svg>Adjusted Files</li>
<li class="sub"><b class="chk"></b><svg class="s16" viewBox="0 0 24 24"><use href="#group"/></svg>Basic Data</li>
</ul></div>
</section>
</aside>
<div class="canvas"></div>
</main>

<footer>
<div class="locator"><svg width="14" height="14"><circle cx="6" cy="6" r="4.500" fill="none" stroke="#777"/><path d="M9.500 9.500l4 3.500" stroke="#777" stroke-width="1.300"/></svg>Suchmuster (Strg+K)</div>
<span class="lab">Koordinate</span><span class="field">-0,163°&nbsp; 0,429°</span>
<svg class="s16" viewBox="0 0 16 16"><circle cx="8" cy="8" r="5" fill="#bbb" stroke="#444"/><path d="M2 2l12 12M2 6l8 8M6 2l8 8M9 5l5-3" stroke="#333" stroke-width="1.200"/></svg>
<span class="lab">Maßstab</span><span class="combo"><em>1:993960</em><i class="tri"></i></span>
<svg class="s16" viewBox="0 0 16 16"><path d="M5 7V5a3 3 0 0 1 6 0v2" fill="none" stroke="#777" stroke-width="1.600"/><rect x="2.500" y="7" width="11" height="7.500" rx="1" fill="#666"/></svg>
<span class="lab">Vergrößerung</span><span class="spin"><em>100%</em><i class="updn"></i></span>
<span class="lab">Drehung</span><span class="spin"><em>0,0 °</em><i class="updn"></i></span>
<b class="chk"></b><span class="lab">Zeichnen</span>
<svg class="s16" viewBox="0 0 16 16"><circle cx="8" cy="8" r="6.500" fill="#bbb" stroke="#666"/><path d="M8 1.500v13M1.500 8h13M3 4.500h10M3 11.500h10" stroke="#666"/><ellipse cx="8" cy="8" rx="3" ry="6.500" fill="none" stroke="#666"/></svg>
<span class="lab epsg">EPSG:4326</span>
<svg class="s16" viewBox="0 0 16 16"><path d="M8 1a7 6.500 0 1 1 2 12.500L12 16l-5-2.500A7 6.500 0 0 1 8 1z" fill="#555"/></svg>
</footer>

<div class="win heat">
<header><svg class="s16" viewBox="0 0 24 24"><use href="#qlogo"/></svg>Heat Net Tool<svg class="x" width="12" height="12"><path d="M1 1l10 10M11 1L1 11" stroke="#777"/></svg></header>
<div class="hbody">
<div class="hmain">
<div class="tabs"><span>Introduction</span><span class="act">Download Files</span><span>Adjust Files</span><span>Status Analysis</span><span>Network Analysis</span></div>
<div class="pane">
<div class="grp about"><h3>The download application is currently optimized for NRW, Germany</h3>
<p class="p1">You can select wether you want to download the shape files of a city or a single district.<br>The district or city name can be chosen with the corresponding combo box (press a<br>letter on your keyboard to jump at the position of that letter in the list). Finally you can<br>choose directories for the GIS files and start the download by pressing 'Start<br>Download'.</p>
<p>House perimeters and streets are downloaded from:<br>https://www.opengeodata.nrw.de/produkte/umwelt_klima/klima/kwp/</p>
<p>Parcels are downloaded from:<br>https://www.wfs.nrw.de/geobasis/wfs_nw_inspire-flurstuecke_alkis</p></div>
<div class="grp pick"><div class="cap">Choose a city or a single district</div>
<div class="row"><i class="radio"></i><label>City</label><span class="sel">Steinfurt<b><i class="tri"></i></b></span></div>
<div class="row"><i class="radio sel1"></i><label>District</label><span class="sel">Burgsteinfurt<b><i class="tri"></i></b></span></div></div>
<div class="grp dirs"><div class="cap">Set Directories for the shape files</div>
<div class="row"><label>Streets</label><span class="inp"></span><button>...</button></div>
<div class="row"><label>Parcels</label><span class="inp"></span><button>...</button></div>
<div class="row"><label>Buildings</label><span class="inp"></span><button>...</button></div></div>
<div class="start">Start Download</div>
<div class="prog">0%</div>
<div class="grp next"></div>
</div></div>
<div class="sbar"><b class="up"></b><span></span><b class="down"></b></div>
</div></div>

<div class="win file">
<header><svg class="s16" viewBox="0 0 24 24"><use href="#qlogo"/></svg>Select output file<svg class="x" width="12" height="12"><path d="M1 1l10 10M11 1L1 11" stroke="#eee" stroke-width="1.200"/></svg></header>
<div class="fnav"><svg width="110" height="16"><path d="M12 8H1M6 3L1 8l5 5M36 8h11M42 3l5 5-5 5" fill="none" stroke="#8a8a8a" stroke-width="1.500"/><path d="M68 6l4 4 4-4" fill="none" stroke="#8a8a8a" stroke-width="1.500"/><path d="M101 14V3M96 8l5-5 5 5" fill="none" stroke="#eee" stroke-width="1.500"/></svg>
<div class="addr"><svg width="16" height="14"><path d="M0 2q0-1 1-1h5l1.500 1.500H15v10H0z" fill="#f5c344"/><path d="M0 5h15v7H0z" fill="#ffd867"/></svg><svg class="chev" width="6" height="8"><path d="M1 1l3 3-3 3" fill="none" stroke="#eee" stroke-width="1.500"/></svg><span>Desktop</span><svg class="chev" width="6" height="8"><path d="M1 1l3 3-3 3" fill="none" stroke="#eee" stroke-width="1.500"/></svg><span>example</span><svg class="re" width="50" height="16"><path d="M1 6.500l4 4 4-4" fill="none" stroke="#ddd" stroke-width="1.300"/><path d="M46.500 5.500a5.500 5.500 0 1 0 1 3.500M47.500 2v4h-4" fill="none" stroke="#ddd" stroke-width="1.300"/></svg></div>
<div class="find">example durchsuchen<svg width="14" height="14"><circle cx="8.500" cy="5" r="3.500" fill="none" stroke="#aaa" stroke-width="1.300"/><path d="M6 7.500L1.500 12.500" stroke="#aaa" stroke-width="1.800"/></svg></div></div>
<div class="fbar"><span>Organisieren</span><i class="tri"></i><span class="nord">Neuer Ordner</span><svg width="75" height="18"><rect x="0" y="1" width="16" height="16" rx="2" fill="#bbb"/><path d="M2 5h12M2 8.300h12M2 11.300h12M2 14.300h12" stroke="#222"/><path d="M25 7h9l-4.500 4.500z" fill="#ccc"/></svg><b class="q">?</b></div>
<div class="fmid">
<div class="tree">
<div class="n"><svg class="s16"><use href="#fhome"/></svg><span>Start</span></div>
<div class="n cur"><svg class="s16"><use href="#fpic"/></svg><span>Katalog</span></div>
<hr>
<div class="n"><svg class="s16"><use href="#fdesk"/></svg><span>Desktop</span><svg class="pin"><use href="#pin"/></svg></div>
<div class="n"><svg class="s16"><use href="#fdoc"/></svg><span>Dokumente</span><svg class="pin"><use href="#pin"/></svg></div>
<div class="n"><svg class="s16"><use href="#fdrv"/></svg><span>teamwetter (</span><svg class="pin"><use href="#pin"/></svg></div>
<div class="n"><svg class="s16"><use href="#fdown"/></svg><span>Downloads</span><svg class="pin"><use href="#pin"/></svg></div>
<div class="n"><svg class="s16"><use href="#fpic"/></svg><span>Bilder</span><svg class="pin"><use href="#pin"/></svg></div>
</div>
<i class="vs"></i>
<div class="list"><div class="cols"><span>Name</span><svg width="10" height="6"><path d="M1 5l4-4 4 4" fill="none" stroke="#999"/></svg><span class="dat">Änderungsdatum</span></div><p>Es wurden keine Suchergebnisse gefunden.</p><div class="hs"><i></i><b></b></div></div>
</div>
<div class="fbot">
<div class="fl"><label>Dateiname:</label><span class="fs first">streets<svg width="10" height="6"><path d="M1 .5l4 4 4-4" fill="none" stroke="#bbb" stroke-width="1.200"/></svg></span></div>
<div class="fl"><label>Dateityp:</label><span class="fs">*.gpkg<svg width="10" height="6"><path d="M1 .5l4 4 4-4" fill="none" stroke="#bbb" stroke-width="1.200"/></svg></span></div>
<div class="acts"><svg width="10" height="8"><path d="M1 6.500l4-4 4 4" fill="none" stroke="#ccc" stroke-width="1.800"/></svg><span>Ordner ausblenden</span><button class="def">Speichern</button><button>Abbrechen</button></div>
</div>
<svg class="corner" width="22" height="22"><path d="M5 0h17v4H5zM1 9h4v11H1z" fill="#fff"/><path d="M17 12h2v2h-2zM13 15h2v2h-2zM17 15h2v2h-2zM10 18h2v2h-2zM13 18h2v2h-2zM17 18h2v2h-2z" fill="#999"/></svg>
</div>
<div class="mark"></div><div class="mark ringm"></div>
</body>
</html>
```
FILE: styles.css
```css
*{box-sizing:border-box}
body{margin:0;width:1920px;height:1029px;overflow:hidden;position:relative;display:flex;flex-direction:column;background:#f0f0f0;font:12px/16px "Noto Sans","Open Sans",sans-serif;letter-spacing:-.4px;color:#111}
svg{display:block;flex:none;overflow:visible;letter-spacing:0}
svg text{font-family:"Noto Sans",sans-serif;letter-spacing:-.3px}
svg text.sf{font-family:"Liberation Serif",serif}
i,em{font-style:normal}
h2,h3,p,ul{margin:0;padding:0;font-weight:400}
.defs{position:absolute;width:0;height:0}
.s16{width:16px;height:16px}

/* main window chrome */
.titlebar{height:23px;background:#f3f3f3;display:flex;align-items:center;padding-left:2px;color:#858585;flex:none}
.titlebar span{margin-left:6px;letter-spacing:-.3px}
.winbtns{margin-left:auto;margin-right:15px}
.menu{height:21px;flex:none;display:grid;grid-template-columns:51px 71px 53px 42px 86px 90px 49px 48px 71px 39px 39px 83px 60px;padding:2px 0 0 11px;color:#a0a0a0;border-bottom:1px solid #d4d4d4;white-space:nowrap}
.menu u{text-underline-offset:2px}
.toolbar{height:39px;flex:none;display:flex;align-items:center;background:linear-gradient(#fafafa,#eee);border-bottom:1px solid #b4b4b4}
.toolbar.last{height:38px;border-bottom:0}
.t{width:24px;height:24px;margin:0 4.500px}
.t.on{width:32px;height:31px;margin:0 .500px;padding:3px;border:1px solid #aaa;border-radius:2px;background:#dcdcdc}
.t.dis{background:#d8d8d8;border-color:#bbb}
.off{filter:grayscale(.8);opacity:.35}
.grip{width:16px;height:17px;flex:none;background:radial-gradient(circle at 1px 1px,#bbb .8px,transparent 1px) 7px 0/3px 3px repeat-y,radial-gradient(circle at 1px 1px,#bbb .8px,transparent 1px) 11px 0/3px 3px repeat-y}
.grip.first{width:12.500px;background-position:4px 0,8px 0}
.sep{width:7px;height:19px;flex:none;background:linear-gradient(90deg,transparent 4px,#ccc 4px,#ccc 5px,transparent 5px)}
.dn,.tri{width:0;height:0;flex:none;border:3px solid transparent;border-top:4px solid #555;border-bottom:0}
.dn{margin:0 3.500px 0 2.500px}
.dn.g,.tri.g{border-top-color:#999}
.spin,.combo{display:flex;align-items:center;border:1px solid #adadad;border-radius:2px;background:#fff;height:21px;padding:0 4px;flex:none}
.combo{background:linear-gradient(#fff,#f0f0f0)}
.toolbar .spin{width:81px;background:#f0f0f0;color:#888;font-size:11px}
.toolbar .combo{width:91px;margin-left:1px;color:#888;font-size:11px;padding-right:8px}
em{flex:1}
.updn{width:7px;height:12px;background:#666;clip-path:polygon(0 4px,3.5px 0,7px 4px,0 4px,0 8px,7px 8px,3.5px 12px,0 8px)}
.toolbar .updn{background:#999}

main{flex:1;min-height:0;display:flex}
aside{width:251px;display:flex;flex-direction:column}
.canvas{flex:1;background:#fff;border:1px solid #b0b0b0}
.dock{display:flex;flex-direction:column;width:245px}
.browser{height:236px;flex:none}
.layers{flex:1;min-height:0}
h2{font-size:12px;line-height:16px;height:22px;padding:3px 2px 0 4px;display:flex;flex:none}
h2 span{margin-left:auto;display:flex;gap:2px;padding-top:1px}
.dtools{height:28px;flex:none;display:flex;align-items:center;gap:9px;padding:0 0 2px 8px}
.dtools .tri{margin:0 0 0 -3px}
.box{border:1px solid #b0b0b0;background:#fff;display:flex;overflow:hidden;flex:1;min-height:0}
.box ul{flex:1;list-style:none;padding-top:2px}
.layers .box ul{padding-top:1px}
.box li{height:18px;display:flex;align-items:center;padding-left:6px;white-space:nowrap;letter-spacing:-.47px}
.browser li>i{width:13px;height:8px}
.rt{background:#555;clip-path:polygon(0 0,4px 4px,0 8px)}
.box li .s16{margin-right:6px}
.root .tri{margin:0 11px 0 1px}
.chk{width:14px;height:14px;border:1px solid #aaa;background:#fff;display:block;flex:none;position:relative}
.chk:after{content:"";position:absolute;left:4px;top:1px;width:5px;height:8px;border:solid #000;border-width:0 2px 2px 0;transform:rotate(38deg)}
.root .chk,.sub .chk{margin-right:6px}
.box .sub{padding-left:44px}
.browser .box{flex:none;height:181px}
.dots{width:18px;margin:2px auto 0;border-top:1px dotted #999}
.sbar{width:14px;display:flex;flex-direction:column;background:#e2e2e2;border-left:1px solid #bbb}
.sbar span{height:57px;background:#fbfbfb;border:solid #bbb;border-width:1px 0}
.sbar b{height:13px;background:#f6f6f6;position:relative;display:grid;place-items:center}
.sbar b:before{content:"";border:4px solid transparent;border-top:0;border-bottom:4px solid #555}
.sbar .down{margin-top:auto;border-top:1px solid #bbb}
.sbar .down:before{transform:rotate(180deg)}

footer{height:25px;flex:none;display:grid;grid-template-columns:1088px 56px 94px 30px 44px 86px 24px 70px 90px 51px 87px 19px 60px 17px 75px 16px;align-items:center;padding:1px 0 0 4px;white-space:nowrap}
.locator{width:200px;height:22px;border:1px solid #aaa;border-radius:2px;background:#fff;display:flex;align-items:center;padding-left:8px;gap:6px;font-size:10.500px;color:#777;letter-spacing:-.3px}
.field{width:92px;height:21px;border:1px solid #adadad;border-radius:2px;background:#fff;line-height:20px;padding-left:6px}
footer .combo{width:77px;background:#fff;padding-right:7px}
footer .spin{width:81px}
footer .lab,footer .field,footer em{font-size:11.500px;letter-spacing:-.45px}

/* floating windows */
.win{position:absolute;overflow:hidden}
.win header{display:flex;align-items:center}
.win header .x{margin-left:auto}
.heat{left:664px;top:170px;width:593px;height:674px;border:1px solid #aaa;border-radius:8px;background:#02202d;box-shadow:0 16px 32px rgba(0,0,0,.28),0 1px 12px rgba(0,0,0,.16);letter-spacing:-.05px}
.heat header{height:30px;background:#f3f3f3;color:#8a8a8a;padding:0 9px 1px 8px;letter-spacing:-.25px}
.heat header .s16{margin-right:5px}
.hbody{display:flex;height:631px;padding:11px 11px 0 20px}
.hmain{width:537px;padding-top:9px;overflow:hidden;display:flex;flex-direction:column}
.hbody .sbar{margin-left:auto;width:14px;border:0}
.hbody .sbar span{height:260px}
.tabs{height:22px;flex:none;display:flex;gap:1px;color:#000}
.tabs span{height:21px;border:1px solid #20a9ad;border-bottom-width:2px;border-radius:5px;background:#fff;width:76px;text-align:center;line-height:20px;white-space:nowrap}
.tabs .act{background:#20a9ad;color:#d8ffff;width:92px;height:22px;border-radius:5px 5px 0 0}
.tabs span:nth-child(3){width:71px}
.tabs span:nth-child(4){width:91px}
.tabs span:nth-child(5){width:103px}
.tabs span:nth-child(n+3){letter-spacing:.08px}
.pane{flex:1;min-height:0;overflow:hidden;border:2px solid #20a9ad;border-bottom:0;border-radius:4px 0 0 0;padding:9px;display:flex;flex-direction:column;color:#fff}
.grp{border:1px solid #20a9ad;border-radius:5px;background:#04364b;flex:none;margin-bottom:6px}
.about{height:210px;padding:4px;white-space:nowrap;letter-spacing:.17px}
h3{font-size:13px;font-weight:700;line-height:17px;letter-spacing:.03px}
.about p{margin-top:12px}
.about .p1{margin-top:15px}
.pick{height:97px;padding:9px;font-family:"Liberation Sans",sans-serif;letter-spacing:0}
.cap{height:25px;border:1px solid #20a9ad;border-radius:5px;padding-left:4px;font:13px/23px "Liberation Sans",sans-serif;letter-spacing:0}
.row{display:flex;align-items:center}
.pick .row{height:20px;margin-top:6px}
.radio{width:16px;height:16px;border-radius:50%;background:#fff;border:1px solid #01202c}
.sel1{background:radial-gradient(#35e4e4,#1c8f95);border:2px solid #01202c}
.pick label{width:44px;margin-left:7px;font-size:12px}
.sel{flex:1;height:20px;border:1px solid #20a9ad;border-radius:2px;background:#fff;color:#000;font-size:14px;line-height:18px;letter-spacing:-.1px;padding-left:1px;display:flex}
.sel b{margin-left:auto;width:16px;height:18px;border:solid #888;border-width:0 2px 2px 0;background:#f6f6f6;display:grid;place-items:center}
.dirs{height:138px;padding:9px;margin-bottom:7px}
.dirs .row{height:24px;margin-top:7px;font:14px/20px "Liberation Sans",sans-serif;letter-spacing:0}
.dirs .cap{margin-bottom:-1px}
.dirs label{width:63px}
.inp{width:401px;height:22px;background:#fff;border:1px solid #20a9ad;border-radius:4px}
.dirs button{margin-left:7px;width:23px;height:23px;border:0;border-radius:8px;background:#20a9ad;color:#fff;font:bold 12px/20px "Liberation Sans",sans-serif;padding:1px 0 0}
.start{margin:0 1px;height:20px;flex:none;border-radius:8px;background:#20a9ad;font:bold 14px/20px "Liberation Sans",sans-serif;letter-spacing:-.1px;text-align:center}
.prog{height:20px;flex:none;margin-top:7px;background:#fff;border:1px solid #aaa;border-radius:2px;color:#000;text-align:center;font-size:10px;line-height:18px}
.next{margin:64px 1px 0;height:30px}

.file{left:1217px;top:234px;width:688px;height:501px;border-radius:7px;border:1px solid #333;background:#191919;color:#fff;padding:0 3px;box-shadow:0 22px 46px rgba(0,0,0,.54),0 2px 20px rgba(0,0,0,.4);letter-spacing:-.46px;white-space:nowrap}
.file header{height:29px;background:#202225;padding:0 5px 2px 4px;letter-spacing:-.3px}
.file header .s16{margin-right:6px}
.fnav{height:55px;display:flex;align-items:center;padding-left:10px}
.addr{margin-left:13px;width:325px;height:34px;border:1px solid #555;display:flex;align-items:center;padding:0 0 2px 8px}
.addr .chev{margin:0 9px 0 8px}
.addr .re{margin-left:auto;margin-right:11px}
.find{margin-left:12px;width:202px;height:34px;border:1px solid #555;display:flex;align-items:center;padding:0 0 2px 5px;color:#7a7a7a;letter-spacing:-.35px}
.find svg{margin-left:auto;margin-right:13px}
.fbar{height:30px;background:#202020;display:flex;align-items:center;padding-left:14px;letter-spacing:-.4px}
.fbar span{width:72px}
.fbar .tri,.list .tri{border-width:4px 4px 0;border-top-color:#bbb}
.fbar .nord{margin-left:31px;width:80px}
.fbar>svg{margin-left:auto}
.q{width:16px;height:16px;border-radius:50%;background:#1a8ee6;text-align:center;line-height:16px;font-size:11px;margin:0 11px 0 -12px}
.fmid{height:268px;display:flex}
.tree{width:135px;padding-top:7px}
.n{height:32px;display:flex;align-items:center;padding-left:30px;letter-spacing:-.4px}
.n span{margin-left:5px;width:69px}
.n .pin{width:11px;height:11px;margin-left:2px}
.cur{background:#333}
hr{height:32px;margin:0 8px 0 6px;border:0;background:linear-gradient(#444,#444) 0 15px/100% 1px no-repeat}
.vs{width:20px;border-right:2px solid #303030;background:linear-gradient(#aaa,#aaa) 8px 18px/2px 91px no-repeat}
.list{flex:1;display:flex;flex-direction:column}
.cols{height:26px;display:flex;padding:0 4px 0 31px;line-height:27px;color:#ddd;letter-spacing:-.35px}
.cols span:first-child{width:146px}
.cols svg{margin:1px 0 0 0}
.cols .dat{border-left:1px solid #666;border-right:1px solid #666;margin-left:auto;width:181px;padding-left:6px}
.list p{text-align:center;padding-top:15px}
.hs{margin-top:auto;height:19px;padding:1px 12px 0 18px;display:flex}
.hs i{width:334px;height:2px;background:#aaa;margin-top:8px}
.hs b{flex:1;height:1px;background:#000}
.fbot{height:117px;margin:0 -3px;background:#383838;padding:10px 3px 0}
.fl{height:23px;margin-bottom:2px;display:flex;align-items:center}
.fl label{width:115px;text-align:right;margin-right:6px}
.fs{flex:1;height:23px;border:1px solid #999;background:#333;line-height:21px;padding-left:3px;display:flex;align-items:center;padding-right:3px}
.fs.first{padding-left:5px}
.fs svg{margin-left:auto}
.acts{display:flex;align-items:center;padding:18px 14px 0 8px}
.acts>svg{margin:6px 8px 0 0}
.acts span{flex:1;padding-top:6px}
.acts button{width:86px;height:25px;border:1px solid #888;border-radius:4px;background:#333;color:#fff;font:inherit;letter-spacing:-.4px;padding:0}
.acts .def{width:90px;border-color:#fff;margin-right:14px}
.corner{position:absolute;left:665px;top:478px}
/* callouts drawn over the windows */
.mark{position:absolute;left:1213px;top:230px;width:695px;height:508px;border:8px solid rgba(206,28,31,.72)}
.ringm{left:1164px;top:600px;width:51px;height:51px;border-radius:50%;border-color:rgba(216,28,34,.64)}
```
